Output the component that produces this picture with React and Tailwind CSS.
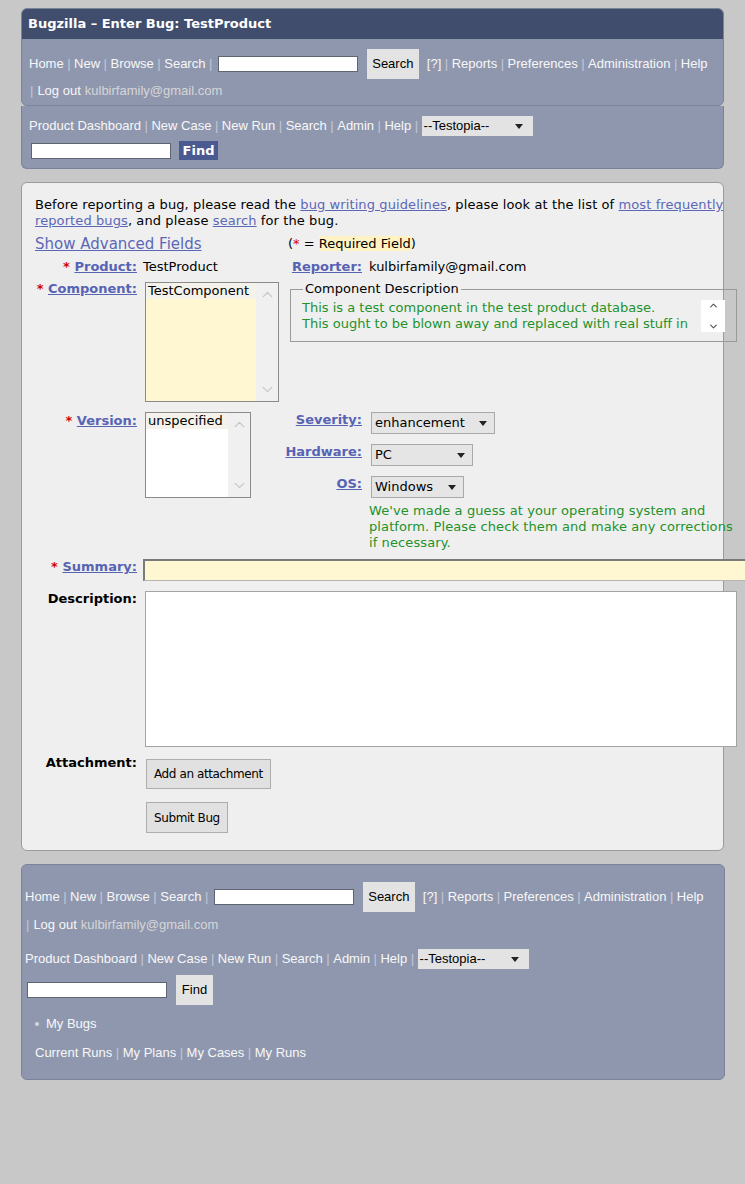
import { ChevronDown, ChevronUp } from 'lucide-react'

const arial = "font-['Liberation_Sans',Arial,sans-serif]"
const linkLabel = 'font-bold text-[#5763b3] underline'

function Sep() {
  return <span className="mx-[3.5px] text-[#c3c8d7]">|</span>
}

function NavLinks({ items }) {
  return items.map((t, i) => (
    <span key={t} className="flex items-center">
      {i > 0 && <Sep />}
      <span className="text-[#f7f7f7]">{t}</span>
    </span>
  ))
}

function Caret() {
  return (
    <svg width="8" height="5" viewBox="0 0 8 5" className="shrink-0">
      <path d="M0 0h8L4 5z" fill="#222" />
    </svg>
  )
}

function FakeSelect({ value, className }) {
  return (
    <div className={`inline-flex shrink-0 items-center justify-between ${className}`}>
      <span>{value}</span>
      <Caret />
    </div>
  )
}

function TextBox({ className = '' }) {
  return <div className={`h-[16px] w-[140px] shrink-0 border border-[#5f6473] bg-white ${className}`} />
}

function GrayBtn({ children, className = '' }) {
  return (
    <div className={`flex h-[30px] shrink-0 items-center justify-center bg-[#e3e3e3] text-[13px] text-black ${className}`}>
      {children}
    </div>
  )
}

function ListBox({ item, className, bg }) {
  return (
    <div className={`flex shrink-0 border border-[#8a8a8a] ${className}`}>
      <div className={`flex-1 ${bg}`}>
        <div className="bg-[#f4f2ea] pl-[2px] leading-[16px]">{item}</div>
      </div>
      <div className="flex w-[22px] flex-col items-center justify-between bg-[#f0f0f0] py-[3px]">
        <ChevronUp size={17} strokeWidth={1.75} color="#c6c6c6" />
        <ChevronDown size={17} strokeWidth={1.75} color="#c6c6c6" />
      </div>
    </div>
  )
}

function Label({ children, req, black, w = 'w-[108px]', pr = 'pr-[6px]', className = '' }) {
  return (
    <div className={`${w} ${pr} h-[16px] shrink-0 text-right leading-[16px] ${className}`}>
      {req && <span className="font-bold text-[#d40000]">* </span>}
      <span className={black ? 'font-bold text-black' : linkLabel}>{children}</span>
    </div>
  )
}

function TopNav({ footer }) {
  const pl = footer ? 'pl-[3px]' : 'pl-[7px]'
  return (
    <>
      <div className={`flex h-[30px] items-center ${pl} whitespace-nowrap`}>
        <NavLinks items={['Home', 'New', 'Browse', 'Search']} />
        <Sep />
        <TextBox className="ml-[2px]" />
        <GrayBtn className="ml-[9px] w-[52px]">Search</GrayBtn>
        <span className="ml-[8px] flex items-center">
          <NavLinks items={['[?]', 'Reports', 'Preferences', 'Administration', 'Help']} />
        </span>
      </div>
      <div className={`flex ${footer ? 'h-[26px]' : 'h-[24px]'} items-center ${pl} whitespace-nowrap`}>
        <span className="mr-[4px] ml-[1px] text-[#c3c8d7]">|</span>
        <span className="text-[#f7f7f7]">Log out</span>
        <span className="ml-[4px] text-[#d6d6d6]">kulbirfamily@gmail.com</span>
      </div>
    </>
  )
}

function TestopiaRow({ footer }) {
  return (
    <div className={`flex h-[20px] items-center ${footer ? 'pl-[3px]' : 'pl-[7px]'} whitespace-nowrap`}>
      <NavLinks items={['Product Dashboard', 'New Case', 'New Run', 'Search', 'Admin', 'Help']} />
      <Sep />
      <FakeSelect
        value="--Testopia--"
        className="h-[20px] w-[111px] bg-[#e3e3e3] pl-[2px] pr-[10px] text-black"
      />
    </div>
  )
}

export default function App() {
  return (
    <div className={`min-h-screen overflow-x-hidden bg-[#c8c8c8] pt-[8px] pb-[40px] ${arial} text-[13px]`}>
      {/* header */}
      <div className="mx-[21px] overflow-hidden rounded-[6px] border border-[#7b839b] bg-[#8f97af]">
        <div className="flex h-[30px] items-center bg-[#404d6d] pl-[6px] font-['DejaVu_Sans',Verdana,sans-serif] text-[13px] font-bold text-white">
          Bugzilla – Enter Bug: TestProduct
        </div>
        <div className="pt-[10px] pb-[2px]">
          <TopNav />
        </div>
      </div>
      <div className="mx-[21px] rounded-b-[6px] border border-t-0 border-[#7b839b] bg-[#8f97af] pt-[10px] pb-[8px]">
        <TestopiaRow />
        <div className="mt-[5px] flex items-center pl-[9px]">
          <TextBox />
          <div className="ml-[8px] flex h-[19px] w-[39px] items-center justify-center bg-[#4a5990] font-['DejaVu_Sans',Verdana,sans-serif] text-[13px] font-bold text-white">
            Find
          </div>
        </div>
      </div>

      {/* main form */}
      <div className="mx-[21px] mt-[13px] rounded-[6px] border border-[#9b9b9b] bg-[#efefef] pt-[14px] pr-[1px] pb-[17px] pl-[13px] font-['DejaVu_Sans',Verdana,sans-serif] text-[13px] text-black">
        <p className="whitespace-nowrap leading-[16px] tracking-[0.1px]">
          Before reporting a bug, please read the{' '}
          <span className="text-[#5c67b8] underline">bug writing guidelines</span>, please look at the list of{' '}
          <span className="text-[#5c67b8] underline">most frequently</span>
          <br />
          <span className="text-[#5c67b8] underline">reported bugs</span>, and please{' '}
          <span className="text-[#5c67b8] underline">search</span> for the bug.
        </p>

        <div className="mt-[6px] flex h-[18px] items-center leading-[18px]">
          <div className="w-[253px] text-[15px] text-[#5c67b8] underline">Show Advanced Fields</div>
          <div>
            (<span className="text-[#d40000]">*</span> = <span className="bg-[#fff3c4]">Required Field</span>)
          </div>
        </div>

        <div className="mt-[6px] flex h-[16px] leading-[16px]">
          <Label req>Product:</Label>
          <div className="w-[141px] shrink-0">TestProduct</div>
          <Label w="w-[82px]" pr="pr-[4px]">Reporter:</Label>
          <div className="ml-[3px]">kulbirfamily@gmail.com</div>
        </div>

        <div className="mt-[7px] flex h-[120px] items-start">
          <Label req className="-mt-[1px]">Component:</Label>
          <ListBox item="TestComponent" className="ml-[2px] h-[120px] w-[134px]" bg="bg-[#fff7d1]" />
          <fieldset className="-mt-[1px] ml-[11px] h-[61px] w-[447px] shrink-0 border border-[#9a9a9a] px-[11px]">
            <legend className="ml-[1px] px-[2px] leading-[16px]">Component Description</legend>
            <div className="mt-[3px] flex">
              <div className="w-[399px] overflow-hidden whitespace-nowrap leading-[16px] text-[#23922b]">
                This is a test component in the test product database.
                <br />
                This ought to be blown away and replaced with real stuff in
              </div>
              <div className="flex w-[24px] flex-col items-center justify-between bg-white">
                <ChevronUp size={11} strokeWidth={2.5} color="#555" />
                <ChevronDown size={11} strokeWidth={2.5} color="#555" />
              </div>
            </div>
          </fieldset>
        </div>

        <div className="mt-[10px] flex items-start">
          <Label req className="mt-[1px]">Version:</Label>
          <div className="w-[141px] shrink-0">
            <ListBox item="unspecified" className="ml-[2px] h-[86px] w-[106px]" bg="bg-white" />
          </div>
          <div>
            {[
              ['Severity:', 'enhancement', 'w-[124px]'],
              ['Hardware:', 'PC', 'w-[102px]'],
              ['OS:', 'Windows', 'w-[93px]'],
            ].map(([l, v, w], i) => (
              <div key={l} className={`flex h-[22px] items-start ${i > 0 ? 'mt-[10px]' : ''}`}>
                <Label w="w-[82px]" pr="pr-[4px]">{l}</Label>
                <FakeSelect
                  value={v}
                  className={`ml-[5px] h-[22px] ${w} border border-[#a9a9a9] bg-[#e5e5e5] pl-[3px] pr-[7px]`}
                />
              </div>
            ))}
            <div className="mt-[5px] ml-[85px] whitespace-nowrap leading-[16px] tracking-[0.1px] text-[#23922b]">
              We've made a guess at your operating system and
              <br />
              platform. Please check them and make any corrections
              <br />
              if necessary.
            </div>
          </div>
        </div>

        <div className="mt-[8px] flex h-[22px] items-start">
          <Label req>Summary:</Label>
          <div className="h-[22px] w-[620px] shrink-0 border border-t-2 border-l-2 border-[#b4b4b4] border-t-[#7a7a7a] border-l-[#7a7a7a] bg-[#fff7d1]" />
        </div>

        <div className="mt-[10px] flex h-[156px] items-start">
          <Label black>Description:</Label>
          <div className="ml-[2px] h-[156px] w-[592px] shrink-0 border border-[#a3a3a3] bg-white" />
        </div>

        <div className="mt-[8px] flex h-[34px] items-start">
          <Label black>Attachment:</Label>
          <div className="mt-[4px] ml-[3px] flex h-[30px] items-center border border-[#adadad] bg-[#e1e1e1] px-[7px] text-[12px] tracking-[-0.4px]">
            Add an attachment
          </div>
        </div>

        <div className="mt-[13px] ml-[111px] flex h-[31px] w-fit items-center border border-[#adadad] bg-[#e1e1e1] px-[7px] text-[12px] tracking-[-0.4px]">
          Submit Bug
        </div>
      </div>

      {/* footer */}
      <div className="mx-[21px] mt-[13px] w-[704px] rounded-[6px] border border-[#7b839b] bg-[#8f97af] pt-[17px] pb-[18px]">
        <TopNav footer />
        <div className="mt-[11px]">
          <TestopiaRow footer />
        </div>
        <div className="mt-[6px] flex h-[30px] items-center pl-[5px]">
          <TextBox />
          <GrayBtn className="ml-[9px] w-[37px]">Find</GrayBtn>
        </div>
        <div className="mt-[11px] flex h-[16px] items-center pl-[13px]">
          <span className="h-[4px] w-[4px] rounded-full bg-[#d3d7e2]" />
          <span className="ml-[7px] text-[#f7f7f7]">My Bugs</span>
        </div>
        <div className="mt-[13px] flex h-[16px] items-center pl-[13px] whitespace-nowrap">
          <NavLinks items={['Current Runs', 'My Plans', 'My Cases', 'My Runs']} />
        </div>
      </div>
    </div>
  )
}
